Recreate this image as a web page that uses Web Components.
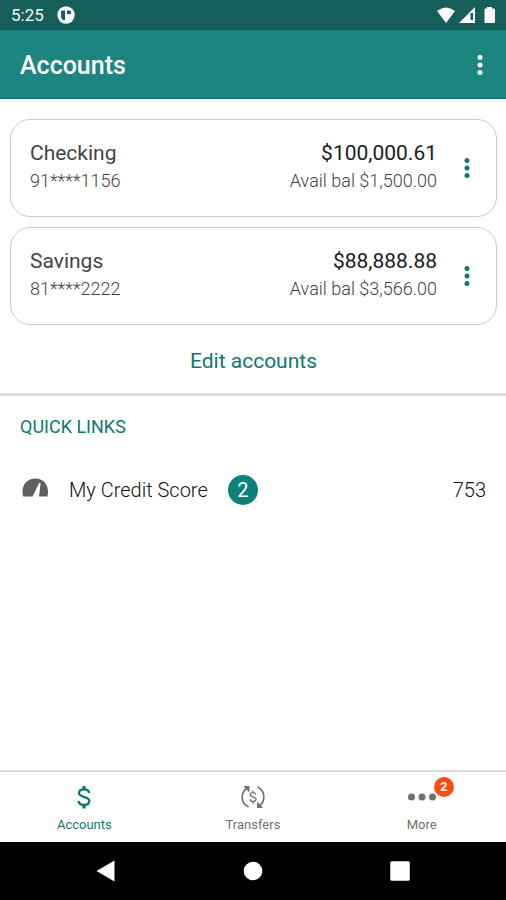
<!DOCTYPE html>
<html lang="en">
<head>
<meta charset="utf-8">
<meta name="viewport" content="width=device-width, initial-scale=1">
<title>Accounts</title>
<style>
  html { height: 100%; }
  body {
    margin: 0;
    min-height: 100%;
    background: #fff;
    font-family: Roboto, "Liberation Sans", sans-serif;
    --teal: #1d857f;
    --teal-ink: #0e7870;
    --teal-dark: #155e5a;
    --rule: #dcdcdc;
  }
</style>
</head>
<body>
<bank-app>
  <status-bar slot="top" time="5:25"></status-bar>
  <app-header slot="top">Accounts</app-header>
  <account-list>
    <account-card name="Checking" number="91****1156" balance="$100,000.61" available="$1,500.00"></account-card>
    <account-card name="Savings" number="81****2222" balance="$88,888.88" available="$3,566.00"></account-card>
    <button slot="action" type="button">Edit accounts</button>
  </account-list>
  <quick-links heading="QUICK LINKS">
    <quick-link label="My Credit Score" count="2" value="753"></quick-link>
  </quick-links>
  <tab-bar slot="bottom">
    <tab-item label="Accounts" active>
      <svg width="26" height="26" viewBox="0 0 26 26" fill="none" stroke="currentColor" stroke-width="2.3" aria-hidden="true"><path stroke-width="3.200" d="M13 2v4M13 20v4.500"/><path d="M18.200 9C18 6.500 16 5.300 13 5.300S8 6.800 8 9.100C8 14 18.300 11.500 18.300 17C18.300 19.400 16.200 20.900 13.200 20.900S7.700 19.400 7.500 16.800"/></svg>
    </tab-item>
    <tab-item label="Transfers">
      <svg width="26" height="26" viewBox="0 0 26 26" fill="none" stroke="currentColor" stroke-width="1.700" aria-hidden="true"><path d="M8.600 23C.4 19.500.1 8.500 7.600 3.500M17.500 3C25.500 6.500 25.900 17.500 18.700 22.500"/><path fill="currentColor" stroke="none" d="M3.500 2H9.500V8.500L7.500 6.500L6 5ZM23 24H17V17.500L19 19.500L20.500 21Z"/><path stroke-width="1.300" d="M13 6.500v2.200M13 17.500v2.300M15.800 10.700C15.500 9.300 14.600 8.700 13 8.700S10.200 9.500 10.200 10.800C10.200 13.600 16 12.300 16 15.300C16 16.700 14.800 17.500 13.100 17.500S10.100 16.800 10 15.200"/></svg>
    </tab-item>
    <tab-item label="More" count="2">
      <svg width="30" height="26" viewBox="0 0 30 26" fill="currentColor" aria-hidden="true"><circle cx="4.500" cy="13" r="3.500"/><circle cx="15" cy="13" r="3.500"/><circle cx="25.500" cy="13" r="3.500"/></svg>
    </tab-item>
  </tab-bar>
  <system-nav slot="bottom"></system-nav>
</bank-app>

<script>
  const define = (name, render) => customElements.define(name, class extends HTMLElement {
    connectedCallback() {
      if (this.shadowRoot) return;
      this.attachShadow({ mode: "open" }).innerHTML = render(this);
    }
  });
  const attr = (el, name) => el.getAttribute(name) || "";

  define("bank-app", () => `
    <style>
      :host { display: flex; flex-direction: column; min-height: 100vh; }
      main { flex: 1; }
    </style>
    <slot name="top"></slot>
    <main><slot></slot></main>
    <slot name="bottom"></slot>`);

  define("status-bar", el => `
    <style>
      :host { display: flex; align-items: center; justify-content: space-between; height: 30px;
        padding: 0 6px 0 11px; background: var(--teal-dark); color: #f4f8f7;
        font-size: 17px; line-height: 32px; }
      div { display: flex; align-items: center; gap: 13px; }
      .signals { gap: 2px; }
      svg { display: block; }
      time { font-weight: 400; }
    </style>
    <div>
      <time>${attr(el, "time")}</time>
      <svg width="18" height="18" viewBox="0 0 18 18" aria-hidden="true"><circle cx="9" cy="9" r="8.700" fill="#fff"/><path fill="#155e5a" d="M4 6Q4 4.500 5.500 4.500H8V14H6.500Q4 13 4 10.500ZM10 4.500h2.500q1.500 0 1.500 1.500V8h-4Z"/></svg>
    </div>
    <div class="signals" role="img" aria-label="Wi-Fi, mobile signal, battery">
      <svg width="20" height="18" viewBox="0 0 20 18"><path fill="#fff" d="M1 5Q10-2 19 5L10 17Z"/></svg>
      <svg width="18" height="18" viewBox="0 0 18 18"><path fill="#fff" d="M17 1V17H1Z"/><path fill="#155e5a" d="M12.500 7H15V14H12.500Z"/></svg>
      <svg width="22" height="18" viewBox="0 0 22 18"><path fill="#fff" d="M9 1h5v1.500h2q1 0 1 1V16q0 1-1 1H7.500q-1 0-1-1V3.500q0-1 1-1H9Z"/></svg>
    </div>`);

  define("more-button", el => `
    <style>
      :host { display: block; }
      button { display: block; border: 0; padding: 8px; background: none; color: inherit; cursor: pointer; }
      svg { display: block; }
    </style>
    <button type="button" aria-label="${attr(el, "label")}">
      <svg width="8" height="24" viewBox="0 0 8 24" fill="currentColor"><circle cx="4" cy="4.600" r="2.500"/><circle cx="4" cy="12" r="2.500"/><circle cx="4" cy="19.400" r="2.500"/></svg>
    </button>`);

  define("app-header", () => `
    <style>
      :host { display: flex; align-items: center; justify-content: space-between; height: 66px;
        padding: 2px 14px 0 20px; background: var(--teal); border-bottom: 1px solid #12716c; color: #fff; }
      h1 { margin: 0; font-size: 25px; line-height: 32px; font-weight: 500; padding-top: 2px; }
    </style>
    <h1><slot></slot></h1>
    <more-button label="More options"></more-button>`);

  define("account-list", () => `
    <style>
      :host { display: flex; flex-direction: column; gap: 10px; padding: 20px 9px 0 10px;
        border-bottom: 3px solid var(--rule); }
      .action { display: flex; justify-content: center; padding: 8px 0 14px; }
      ::slotted(button) { border: 0; padding: 4px 12px; background: none; color: var(--teal-ink);
        font: 400 21px/28px Roboto, "Liberation Sans", sans-serif; cursor: pointer; }
    </style>
    <slot></slot>
    <div class="action"><slot name="action"></slot></div>`);

  define("account-card", el => `
    <style>
      :host { display: flex; align-items: center; gap: 18px; padding: 19px 17px 21px 19px;
        border: 1px solid #cacaca; border-radius: 20px; }
      .names { flex: 1; }
      .sums { text-align: right; }
      p { margin: 0; font-size: 18px; line-height: 28px; font-weight: 300; color: #444; }
      .name { font-size: 21px; font-weight: 400; color: #444; }
      .balance { font-size: 21px; font-weight: 400; color: #1c1c1c; }
      more-button { color: var(--teal-ink); padding-top: 2px; }
    </style>
    <div class="names">
      <p class="name">${attr(el, "name")}</p>
      <p>${attr(el, "number")}</p>
    </div>
    <div class="sums">
      <p class="balance">${attr(el, "balance")}</p>
      <p>Avail bal ${attr(el, "available")}</p>
    </div>
    <more-button label="${attr(el, "name")} options"></more-button>`);

  define("quick-links", el => `
    <style>
      :host { display: block; padding: 17px 20px 0; }
      h2 { margin: 0 0 31px; font-size: 18px; line-height: 28px; font-weight: 400; color: var(--teal-ink); }
    </style>
    <h2>${attr(el, "heading")}</h2>
    <slot></slot>`);

  define("quick-link", el => `
    <style>
      :host { display: block; }
      a { display: flex; align-items: center; gap: 20px; color: #111; text-decoration: none;
        font-size: 20px; line-height: 36px; font-weight: 300; }
      svg { display: block; }
      .badge { width: 30px; height: 30px; border-radius: 50%; background: #0f8179; color: #fff;
        line-height: 30px; text-align: center; font-weight: 400; }
      .value { margin-left: auto; }
    </style>
    <a href="#credit-score">
      <svg width="29" height="28" viewBox="0 2 29 28" aria-hidden="true"><path fill="#606060" d="M3.200 22.500C.5 13 6 4.500 15.300 4.500S30 13 27.400 22.500H19L20.600 9.500Q20 8.300 19 9.300L12.500 22.500Z"/></svg>
      <span>${attr(el, "label")}</span>
      <span class="badge">${attr(el, "count")}</span>
      <span class="value">${attr(el, "value")}</span>
    </a>`);

  define("tab-bar", () => `
    <style>
      :host { display: block; border-top: 2px solid var(--rule); background: #fff; }
      nav { display: grid; grid-template-columns: repeat(3, 1fr); }
    </style>
    <nav aria-label="Main"><slot></slot></nav>`);

  define("tab-item", el => `
    <style>
      :host { display: block; color: #707070; }
      :host([active]) { color: var(--teal-ink); }
      button { display: flex; flex-direction: column; align-items: center; gap: 5px; width: 100%;
        padding: 12px 0 7px; border: 0; background: none; color: inherit; cursor: pointer;
        font: 400 13px/20px Roboto, "Liberation Sans", sans-serif; }
      .icon { position: relative; display: flex; }
      .badge { position: absolute; top: -7px; right: -17px; width: 20px; height: 20px; border-radius: 50%;
        background: #ff4a11; color: #fff; line-height: 20px; text-align: center; font-weight: 700; }
    </style>
    <button type="button">
      <span class="icon"><slot></slot>${el.hasAttribute("count") ? `<span class="badge">${attr(el, "count")}</span>` : ""}</span>
      <span>${attr(el, "label")}</span>
    </button>`);

  define("system-nav", () => `
    <style>
      :host { display: grid; grid-template-columns: repeat(3, 1fr); height: 58px; padding: 0 33px; background: #000; }
      button { display: flex; align-items: center; justify-content: center; border: 0; padding: 0; background: none; cursor: pointer; }
    </style>
    <button type="button" aria-label="Back"><svg width="22" height="22" viewBox="0 0 22 22"><path fill="#fff" d="M19.500.5V21.500L1.500 11Z"/></svg></button>
    <button type="button" aria-label="Home"><svg width="22" height="22" viewBox="0 0 22 22"><circle cx="11" cy="11" r="9.300" fill="#fff"/></svg></button>
    <button type="button" aria-label="Recent apps"><svg width="22" height="22" viewBox="0 0 22 22"><rect x="1.300" y="1.300" width="19.500" height="19.500" rx="1.500" fill="#fff"/></svg></button>`);
</script>
</body>
</html>
